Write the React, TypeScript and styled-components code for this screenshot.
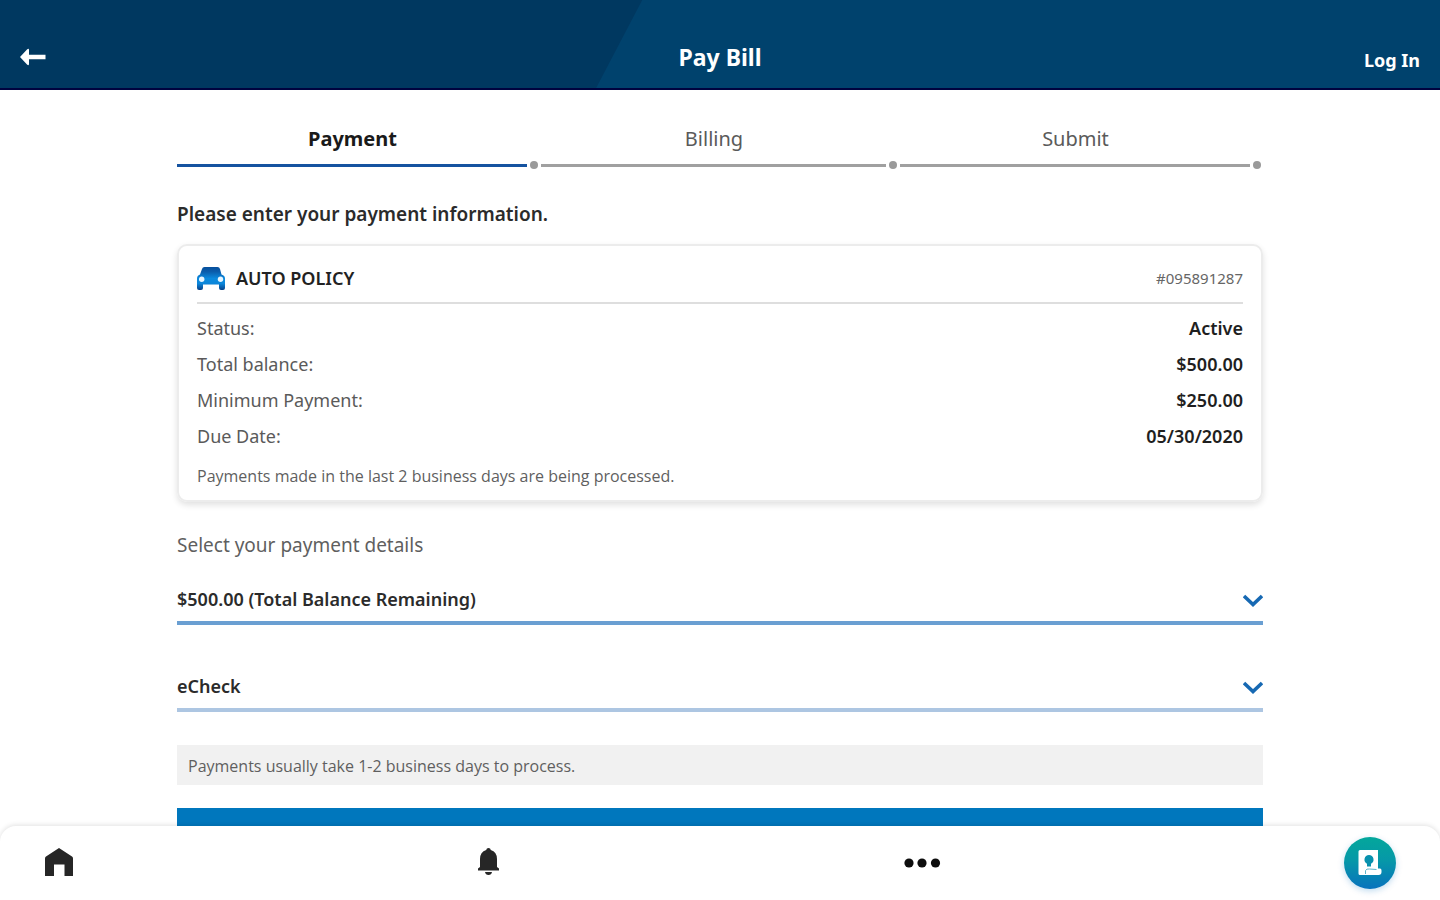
import React from "react";
import styled, { createGlobalStyle } from "styled-components";

const GlobalStyle = createGlobalStyle`
  *, *::before, *::after { box-sizing: border-box; }
  body {
    margin: 0;
    background: #fff;
    color: #333;
    font-family: "Noto Sans", "Open Sans", sans-serif;
  }
  h1, h2, h3, p, dl, dd, ol { margin: 0; padding: 0; }
  button { font: inherit; border: 0; background: none; padding: 0; cursor: pointer; }
`;

const Header = styled.header`
  position: relative;
  display: grid;
  grid-template-columns: 1fr auto 1fr;
  align-items: center;
  height: 90px;
  padding: 26px 20px 0;
  background: #00426d;
  border-bottom: 2px solid #00033f;
  color: #fff;

  &::before {
    content: "";
    position: absolute;
    inset: 0;
    background: #003860;
    clip-path: polygon(0 0, 44.6% 0, 41.4% 100%, 0 100%);
  }

  > * { position: relative; }
`;

const BackButton = styled.button`
  justify-self: start;
  display: flex;
  color: #fff;
`;

const Title = styled.h1`
  font-size: 23px;
  line-height: 32px;
  font-weight: 700;
`;

const LogIn = styled.a`
  justify-self: end;
  padding-top: 6px;
  color: #fff;
  font-size: 18px;
  line-height: 24px;
  font-weight: 700;
  text-decoration: none;
`;

const Main = styled.main`
  width: 100%;
  max-width: 1086px;
  margin: 0 auto;
  padding: 35px 0 24px;
`;

const Steps = styled.ol`
  && { padding-right: 2px; }
  display: grid;
  grid-template-columns: 361fr 356fr 361fr;
  gap: 3px;
  list-style: none;
`;

const Step = styled.li<{ $active?: boolean }>`
  color: ${(p) => (p.$active ? "#1a1a1a" : "#5a5a5a")};
  font-size: 20px;
  line-height: 28px;
  font-weight: ${(p) => (p.$active ? 700 : 400)};
  text-align: center;
`;

const StepLabel = styled.div`
  padding-right: 10px;
`;

const StepTrack = styled.div<{ $active?: boolean }>`
  display: flex;
  align-items: center;
  gap: 3px;
  height: 8px;
  margin-top: 8px;

  &::before {
    content: "";
    flex: 1;
    height: 3px;
    background: ${(p) => (p.$active ? "#1553a0" : "#a0a0a0")};
  }
  &::after {
    content: "";
    width: 8px;
    height: 8px;
    border-radius: 50%;
    background: #9a9a9a;
  }
`;

const Heading = styled.h2`
  margin-top: 31px;
  color: #2b2b2b;
  font-size: 19px;
  line-height: 28px;
  font-weight: 600;
`;

const Card = styled.section`
  margin-top: 16px;
  padding: 8px 18px 12px;
  border: 2px solid #ececec;
  border-radius: 10px;
  box-shadow: 0 3px 6px rgba(0, 0, 0, 0.12);
`;

const CardHead = styled.div`
  display: flex;
  align-items: center;
  gap: 10px;
  height: 50px;
  border-bottom: 2px solid #dedede;
`;

const CardTitle = styled.h3`
  flex: 1;
  color: #222;
  font-size: 18px;
  line-height: 24px;
  font-weight: 600;
`;

const PolicyNumber = styled.span`
  color: #666;
  font-size: 15px;
  line-height: 24px;
`;

const Details = styled.dl`
  && { padding-top: 6px; }
`;

const Detail = styled.div`
  display: flex;
  justify-content: space-between;
  font-size: 18px;
  line-height: 36px;

  dt { color: #5a5a5a; }
  dd { color: #1f1f1f; font-weight: 600; }
`;

const CardNote = styled.p`
  margin-top: 10px;
  color: #5f5f5f;
  font-family: "Open Sans", "Noto Sans", sans-serif;
  font-size: 16px;
  line-height: 24px;
`;

const SectionTitle = styled.h2`
  margin-top: 29px;
  color: #5f5f5f;
  font-size: 19px;
  line-height: 28px;
  font-weight: 400;
`;

const Field = styled.div<{ $light?: boolean }>`
  position: relative;
  margin-top: ${(p) => (p.$light ? 39 : 18)}px;

  select {
    display: block;
    width: 100%;
    height: 48px;
    padding: 0;
    border: 0;
    border-bottom: 4px solid ${(p) => (p.$light ? "#adc6e2" : "#6a9fd2")};
    border-radius: 0;
    outline: 0;
    appearance: none;
    background: transparent;
    color: #2b2b2b;
    font: 600 18px/24px "Noto Sans", sans-serif;
  }

  svg {
    position: absolute;
    right: 0;
    top: 16px;
    pointer-events: none;
  }
`;

const Notice = styled.p`
  && { padding: 9px 11px 7px; }
  margin-top: 33px;
  background: #f1f1f1;
  color: #5f5f5f;
  font-family: "Open Sans", "Noto Sans", sans-serif;
  font-size: 16px;
  line-height: 24px;
`;

const PrimaryButton = styled.button`
  display: block;
  width: 100%;
  height: 48px;
  margin-top: 23px;
  background: #0077bd;
`;

const BottomNav = styled.nav`
  position: fixed;
  inset: auto 0 0;
  display: flex;
  align-items: center;
  justify-content: space-between;
  height: 74px;
  padding: 0 44px;
  border-radius: 16px 16px 0 0;
  background: #fff;
  box-shadow: 0 -1px 5px rgba(0, 0, 0, 0.12);
`;

const NavButton = styled.button`
  display: flex;
  color: #262626;
`;

const ClaimButton = styled(NavButton)`
  align-items: center;
  justify-content: center;
  width: 52px;
  height: 52px;
  border-radius: 50%;
  background: linear-gradient(#04a79b, #0698a8 45%, #0872bd);
  box-shadow: 0 2px 6px rgba(0, 110, 190, 0.25);
`;

const Chevron = () => (
  <svg width="20" height="16" viewBox="0 0 20 16" fill="none" stroke="#1769b3" strokeWidth="3.600">
    <path d="M1 3l9 8.500L19 3" />
  </svg>
);

const CarIcon = () => (
  <svg width="29" height="24" viewBox="0 0 29 24">
    <defs>
      <linearGradient id="car" x1="0" y1="0" x2="0" y2="1">
        <stop offset="0" stopColor="#074f9c" />
        <stop offset="0.2" stopColor="#0a5cab" />
        <stop offset="0.5" stopColor="#0b8ade" />
        <stop offset="0.72" stopColor="#0b86da" />
        <stop offset="1" stopColor="#063f88" />
      </linearGradient>
    </defs>
    <path
      fill="url(#car)"
      d="M7.500 1h13q2 0 2.500 2l1.500 5.500q3.500 1 3.500 4V22q0 2-2 2h-2q-2 0-2-2v-3.500H6V22q0 2-2 2H2q-2 0-2-2V12.500q0-3 3-4L5 3q.5-2 2.500-2z"
    />
    <circle cx="4.700" cy="13.300" r="2.700" fill="#e6f5ff" />
    <circle cx="23.500" cy="13.300" r="2.700" fill="#e6f5ff" />
  </svg>
);

const rows = [
  ["Status:", "Active"],
  ["Total balance:", "$500.00"],
  ["Minimum Payment:", "$250.00"],
  ["Due Date:", "05/30/2020"],
];

export default function App() {
  return (
    <>
      <GlobalStyle />
      <Header>
        <BackButton aria-label="Back">
          <svg width="26" height="18" viewBox="0 0 26 18" fill="currentColor">
            <path d="M0 9l7-7.500q2-1.500 2 .5v4.800h16.500v4.400H9V16q0 2-2 .5z" />
          </svg>
        </BackButton>
        <Title>Pay Bill</Title>
        <LogIn href="#login">Log In</LogIn>
      </Header>

      <Main>
        <Steps>
          {["Payment", "Billing", "Submit"].map((label, i) => (
            <Step key={label} $active={i === 0} aria-current={i === 0 ? "step" : undefined}>
              <StepLabel>{label}</StepLabel>
              <StepTrack $active={i === 0} />
            </Step>
          ))}
        </Steps>

        <Heading>Please enter your payment information.</Heading>

        <Card>
          <CardHead>
            <CarIcon />
            <CardTitle>AUTO POLICY</CardTitle>
            <PolicyNumber>#095891287</PolicyNumber>
          </CardHead>
          <Details>
            {rows.map(([term, value]) => (
              <Detail key={term}>
                <dt>{term}</dt>
                <dd>{value}</dd>
              </Detail>
            ))}
          </Details>
          <CardNote>Payments made in the last 2 business days are being processed.</CardNote>
        </Card>

        <SectionTitle>Select your payment details</SectionTitle>

        <Field>
          <select aria-label="Payment amount">
            <option>$500.00 (Total Balance Remaining)</option>
          </select>
          <Chevron />
        </Field>
        <Field $light>
          <select aria-label="Payment method">
            <option>eCheck</option>
          </select>
          <Chevron />
        </Field>

        <Notice>Payments usually take 1-2 business days to process.</Notice>
        <PrimaryButton aria-label="Continue" />
      </Main>

      <BottomNav>
        <NavButton aria-label="Home">
          <svg width="30" height="30" viewBox="0 0 30 30" fill="currentColor">
            <path d="M15 0l13 8.500q1 .7 1 2V28h-8.500V16.500H10V28H1V10.500q0-1.300 1-2z" />
          </svg>
        </NavButton>
        <NavButton aria-label="Notifications">
          <svg width="24" height="30" viewBox="0 0 24 30" fill="currentColor">
            <path d="M11.500 0q2 0 2.300 2Q20 4 20 11v8l2 1.500V22.500H1v-2L3 19v-8Q3 4 9.200 2 9.500 0 11.500 0zM8 24h7q-.5 3-3.500 3T8 24z" />
          </svg>
        </NavButton>
        <NavButton aria-label="More">
          <svg width="38" height="10" viewBox="0 0 38 10" fill="#0d0d0d">
            <circle cx="6" cy="5" r="4.600" />
            <circle cx="19" cy="5" r="4.600" />
            <circle cx="32.500" cy="5" r="4.600" />
          </svg>
        </NavButton>
        <ClaimButton aria-label="Claims">
          <svg width="24" height="28" viewBox="0 0 24 28">
            <path fill="#fff" d="M2 1h18v18.500h2q1.500 0 1.500 2V23q0 3-3 3H2q-1.500 0-1.500-1.500v-22Q.5 1 2 1z" />
            <path fill="#0891ae" d="M11 6a4.600 4.600 0 0 1 2 8.700V17.500H9v-2.800A4.600 4.600 0 0 1 11 6z" />
            <path fill="none" stroke="#5fb4cb" d="M7.500 25v-3.500q1-2 4-1.500l7 .5" />
          </svg>
        </ClaimButton>
      </BottomNav>
    </>
  );
}
